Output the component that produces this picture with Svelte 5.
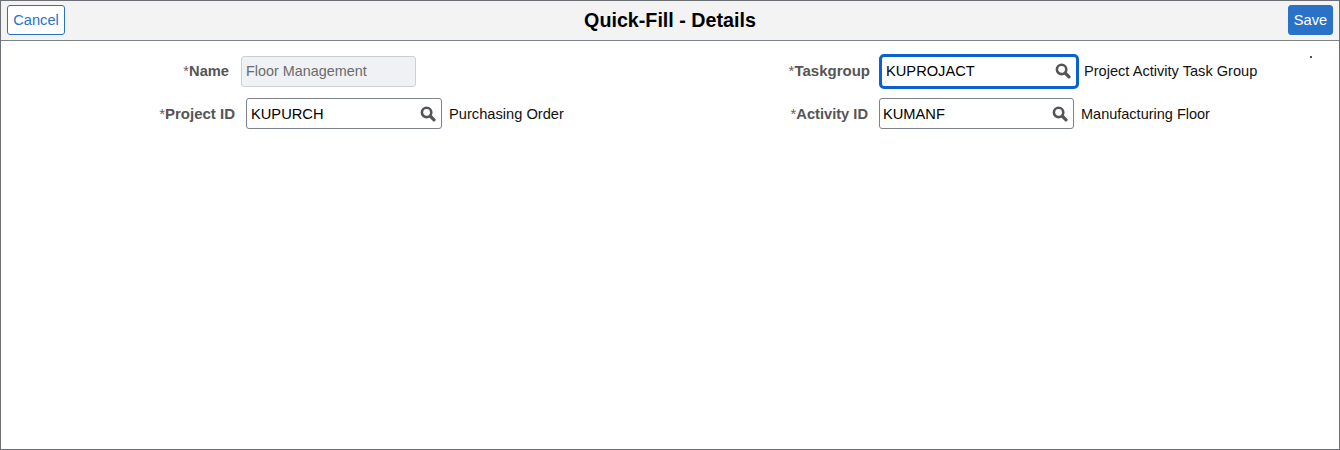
<script>
  const left = [
    { label: 'Name', value: 'Floor Management', disabled: true, cls: 'name' },
    { label: 'Project ID', value: 'KUPURCH', desc: 'Purchasing Order', cls: 'project' }
  ];
  const right = [
    { label: 'Taskgroup', value: 'KUPROJACT', desc: 'Project Activity Task Group', cls: 'taskgroup', focused: true },
    { label: 'Activity ID', value: 'KUMANF', desc: 'Manufacturing Floor', cls: 'activity' }
  ];
</script>

{#snippet field(f)}
  <div class="row {f.cls}">
    <label class="lbl" for={f.cls}><span class="req">*</span>{f.label}</label>
    {#if f.disabled}
      <input id={f.cls} class="box disabled" value={f.value} disabled />
    {:else}
      <div class="box lookup">
        <input id={f.cls} value={f.value} />
        <svg class="mag" viewBox="0 0 16 16" width="16" height="16" aria-hidden="true">
          <circle cx="6.6" cy="6.4" r="4.7" fill="none" stroke="#555" stroke-width="2.6" />
          <path d="M10.2 10 L14 13.8" stroke="#555" stroke-width="3.2" stroke-linecap="round" />
        </svg>
      </div>
      <span class="desc">{f.desc}</span>
    {/if}
  </div>
{/snippet}

<div class="page">
  <header>
    <button class="btn cancel">Cancel</button>
    <h1>Quick-Fill - Details</h1>
    <button class="btn save">Save</button>
  </header>
  <main>
    <div class="col">
      {#each left as f}{@render field(f)}{/each}
    </div>
    <div class="col">
      {#each right as f}{@render field(f)}{/each}
    </div>
    <span class="dot"></span>
  </main>
</div>

<style>
  :global(body) {
    margin: 0;
    background: #fff;
    font-family: "Liberation Sans", Arial, sans-serif;
  }
  .page {
    box-sizing: border-box;
    width: 1340px;
    height: 450px;
    border: 1px solid #6b6f73;
    display: flex;
    flex-direction: column;
  }
  header {
    box-sizing: border-box;
    height: 40px;
    flex: none;
    background: #f3f3f3;
    border-bottom: 1px solid #7d8388;
    display: flex;
    align-items: center;
    justify-content: space-between;
    padding: 0 0 1px 6px;
    position: relative;
  }
  h1 {
    position: absolute;
    left: 0;
    right: 0;
    top: 8px;
    margin: 0;
    text-align: center;
    font-size: 19.7px;
    line-height: 22px;
    font-weight: bold;
    color: #000;
    pointer-events: none;
  }
  .btn {
    box-sizing: border-box;
    height: 30px;
    border-radius: 3px;
    font: 14.67px/1 "Liberation Sans", Arial, sans-serif;
    padding: 0;
  }
  .cancel {
    width: 58px;
    background: #fff;
    border: 1px solid #2a72c8;
    color: #2a72c8;
  }
  .save {
    width: 45px;
    margin-right: 6px;
    background: #2a72c8;
    border: 1px solid #2a72c8;
    color: #fff;
  }
  main {
    flex: 1;
    position: relative;
    display: grid;
    grid-template-columns: 634px 1fr;
  }
  .col {
    display: flex;
    flex-direction: column;
  }
  .row {
    display: flex;
    align-items: center;
    height: 31px;
    font-size: 14.67px;
  }
  .row.name { margin-top: 15px; }
  .row.project { margin-top: 11px; }
  .row.taskgroup { margin-top: 14px; height: 33px; }
  .row.activity { margin-top: 10px; }
  .lbl {
    text-align: right;
    font-size: 15px;
    font-weight: bold;
    color: #555;
    white-space: nowrap;
    flex: none;
  }
  .name .lbl, .taskgroup .lbl { padding-bottom: 2px; }
  .name .lbl, .activity .lbl { font-size: 14.67px; }
  .req {
    font-weight: normal;
    color: #6e5a5a;
  }
  .name .lbl { width: 228px; margin-right: 12px; }
  .project .lbl { width: 234px; margin-right: 11px; }
  .taskgroup .lbl { width: 235px; margin-right: 9px; }
  .activity .lbl { width: 233px; margin-right: 11px; }
  .box {
    box-sizing: border-box;
    height: 31px;
    border-radius: 3px;
    font: 14.67px "Liberation Sans", Arial, sans-serif;
  }
  .disabled {
    width: 175px;
    padding: 0 4px 2px;
    background: #eff1f5;
    border: 1px solid #ccd0d5;
    color: #6b6b6b;
    font-size: 14.4px;
  }
  .lookup {
    display: flex;
    align-items: center;
    background: #fff;
    border: 1px solid #7d8388;
    padding: 0 5px 0 4px;
  }
  .lookup input {
    flex: 1;
    min-width: 0;
    border: 0;
    outline: 0;
    padding: 0;
    background: none;
    color: #000;
    font: inherit;
  }
  .mag { flex: none; }
  .project .lookup { width: 196px; }
  .activity .lookup { width: 195px; padding-left: 3px; }
  .taskgroup .lookup {
    width: 200px;
    height: 35px;
    margin: -1px 0;
    border: 3px solid #0a62d0;
    border-radius: 5px;
    padding: 0 5px 2px 4px;
  }
  .desc {
    margin-left: 7px;
    color: #111;
    white-space: nowrap;
  }
  .activity .desc { font-size: 14.5px; }
  .taskgroup .desc { margin-left: 5px; padding-bottom: 2px; font-size: 14.6px; }
  .dot {
    position: absolute;
    left: 1309px;
    top: 15px;
    width: 2px;
    height: 2px;
    background: #555;
  }
</style>
